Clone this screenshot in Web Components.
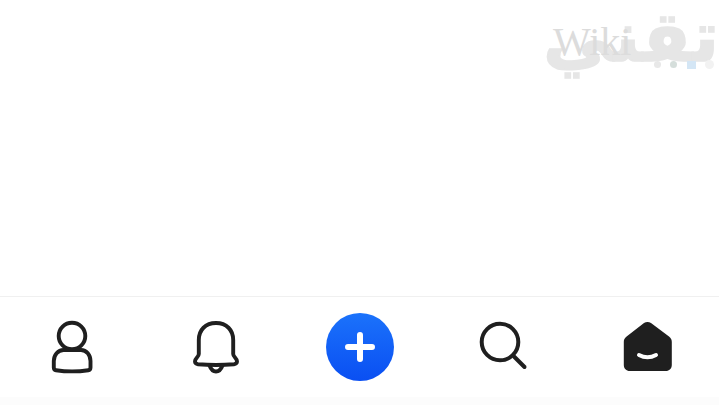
<!DOCTYPE html>
<html lang="ar">
<head>
<meta charset="utf-8">
<title>Bottom nav</title>
<style>
    html, body {
        margin: 0;
        height: 100%;
        background: #fff;
    }
</style>
</head>
<body>
<app-shell>
    <wiki-mark slot="mark"></wiki-mark>
    <bottom-nav slot="nav">
        <nav-item>
            <svg width="60" height="60" viewBox="0 0 60 60" fill="none" stroke="#1f1f1f" stroke-width="3.9" stroke-linecap="round" stroke-linejoin="round">
                <circle cx="29" cy="19" r="13.300"/>
                <path d="M20.500 33H38C43.500 33 47.500 38 47.500 44V50.500C47.500 52.300 46.800 53 45.300 53.200C34.500 54.800 23.500 54.800 13 53.200C11.500 53 10.800 52.300 10.800 50.500V44C10.800 38 15 33 20.500 33Z"/>
            </svg>
        </nav-item>
        <nav-item>
            <svg width="60" height="60" viewBox="0 0 60 60" fill="none" stroke="#1f1f1f" stroke-width="3.9" stroke-linecap="round" stroke-linejoin="round">
                <path d="M30 6C19.500 6 12.800 13 12.800 23V37C12.800 40 9 41 9 44.300C9 46.300 10.300 47 12 47.200C24 48.300 36 48.300 48 47.200C49.700 47 51 46.300 51 44.300C51 41 47.200 40 47.200 37V23C47.200 13 40.500 6 30 6Z"/>
                <path d="M23.500 48.500C25 52.500 27 54.500 30 54.500C33 54.500 35 52.500 36.500 48.500"/>
            </svg>
        </nav-item>
        <nav-item>
            <add-button></add-button>
        </nav-item>
        <nav-item>
            <svg width="60" height="60" viewBox="0 0 60 60" fill="none" stroke="#1f1f1f" stroke-width="4" stroke-linecap="round" stroke-linejoin="round">
                <circle cx="26" cy="25" r="18.300"/>
                <path d="M40 39.500L50.500 50"/>
            </svg>
        </nav-item>
        <nav-item>
            <svg width="60" height="60" viewBox="0 0 60 60">
                <path fill="#1f1f1f" d="M27 6C29 4.500 32 4.500 34 6L52 19.500C54 21 54.800 22.500 54.800 25V48C54.800 51.500 52.300 54 48.800 54H12.800C9.300 54 6.800 51.500 6.800 48V25C6.800 22.500 7.600 21 9.600 19.500Z"/>
                <path fill="none" stroke="#fff" stroke-width="4" stroke-linecap="round" d="M22 38C27.500 41 33.500 41 39 38"/>
            </svg>
        </nav-item>
    </bottom-nav>
</app-shell>

<script>
    class AppShell extends HTMLElement {
        constructor() {
            super();
            this.attachShadow({ mode: "open" });
            this.shadowRoot.innerHTML = `
                <style>
                    :host {
                        display: flex;
                        flex-direction: column;
                        height: 100vh;
                        background: #fff;
                    }
                    main {
                        flex: 1;
                        position: relative;
                        overflow: hidden;
                    }
                    footer {
                        background: #fcfcfc;
                        padding-bottom: 8px;
                    }
                </style>
                <main><slot name="mark"></slot></main>
                <footer><slot name="nav"></slot></footer>
            `;
        }
    }

    class WikiMark extends HTMLElement {
        constructor() {
            super();
            this.attachShadow({ mode: "open" });
            this.shadowRoot.innerHTML = `
                <style>
                    :host {
                        display: block;
                        position: absolute;
                        top: 0;
                        right: 0;
                        width: 180px;
                        height: 90px;
                        color: #e6e6e6;
                    }
                    .arabic {
                        position: absolute;
                        right: 0;
                        top: 0;
                        font: bold 70px/74px "DejaVu Sans", sans-serif;
                        -webkit-text-stroke: 1.5px #e6e6e6;
                        direction: rtl;
                        white-space: nowrap;
                    }
                    .latin {
                        position: absolute;
                        left: 14px;
                        top: 20px;
                        font: 40px/44px "Liberation Serif", serif;
                        color: #dcdcdc;
                    }
                    .dots {
                        position: absolute;
                        top: 60px;
                        left: 115px;
                        display: flex;
                        gap: 9px;
                        align-items: center;
                    }
                    .dots i {
                        width: 7px;
                        height: 7px;
                        border-radius: 50%;
                        background: #e8e8e8;
                    }
                    .dots i:nth-child(2) { background: #d5dedb; }
                    .dots i:nth-child(3) { background: #d4e6f5; border-radius: 0; width: 9px; height: 8px; margin-left: 1px; }
                    .dots i:nth-child(4) { background: #f2f2f2; width: 9px; height: 9px; }
                </style>
                <div class="arabic">تقني</div>
                <div class="latin">Wiki</div>
                <div class="dots"><i></i><i></i><i></i><i></i></div>
            `;
        }
    }

    class BottomNav extends HTMLElement {
        constructor() {
            super();
            this.attachShadow({ mode: "open" });
            this.shadowRoot.innerHTML = `
                <style>
                    :host {
                        display: grid;
                        grid-template-columns: repeat(5, 1fr);
                        height: 100px;
                        padding-left: 1px;
                        background: #fff;
                        border-top: 1px solid #f0f0f0;
                    }
                </style>
                <slot></slot>
            `;
        }
    }

    class NavItem extends HTMLElement {
        constructor() {
            super();
            this.attachShadow({ mode: "open" });
            this.shadowRoot.innerHTML = `
                <style>
                    :host {
                        display: flex;
                        align-items: center;
                        justify-content: center;
                    }
                </style>
                <slot></slot>
            `;
        }
    }

    class AddButton extends HTMLElement {
        constructor() {
            super();
            this.attachShadow({ mode: "open" });
            this.shadowRoot.innerHTML = `
                <style>
                    :host {
                        display: flex;
                        align-items: center;
                        justify-content: center;
                        width: 68px;
                        height: 68px;
                        border-radius: 50%;
                        background: linear-gradient(#1b72fb, #0a4ff2);
                    }
                </style>
                <svg width="32" height="32" viewBox="0 0 32 32">
                    <path d="M16 4V28M4 16H28" stroke="#fff" stroke-width="6" stroke-linecap="round"/>
                </svg>
            `;
        }
    }

    customElements.define("app-shell", AppShell);
    customElements.define("wiki-mark", WikiMark);
    customElements.define("bottom-nav", BottomNav);
    customElements.define("nav-item", NavItem);
    customElements.define("add-button", AddButton);
</script>
</body>
</html>
